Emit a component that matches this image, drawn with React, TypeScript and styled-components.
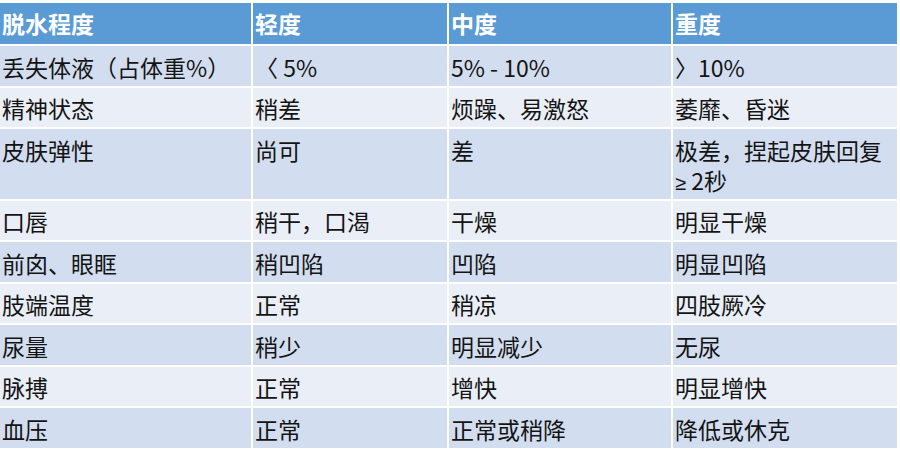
import React from "react";
import styled, { createGlobalStyle } from "styled-components";

const GlobalStyle = createGlobalStyle`
  html, body {
    margin: 0;
    padding: 0;
    background: #ffffff;
  }
  body {
    font-family: "Noto Sans CJK SC", "Noto Sans", sans-serif;
  }
`;

const Page = styled.div`
  width: 900px;
  height: 454px;
  padding-top: 3px;
  box-sizing: border-box;
  background: #ffffff;
`;

const Table = styled.div`
  display: grid;
  grid-template-columns: 251px 194px 222px 224px;
  column-gap: 2px;
  row-gap: 2px;
  width: 897px;
`;

const HeadCell = styled.div`
  background: #5b9bd5;
  color: #ffffff;
  font-weight: 700;
  font-size: 23px;
  line-height: 30px;
  height: 41px;
  box-sizing: border-box;
  padding: 5px 0 6px 2px;
  white-space: nowrap;
`;

const Cell = styled.div<{ $band: "dark" | "light"; $tall?: boolean }>`
  background: ${(p) => (p.$band === "dark" ? "#d2deef" : "#eaeff7")};
  color: #141414;
  font-size: 23px;
  line-height: 30px;
  height: ${(p) => (p.$tall ? "69.5px" : "39.5px")};
  box-sizing: border-box;
  padding: 5.5px 0 4px 2px;
  white-space: nowrap;
`;

const Latin = styled.span`
  font-family: "Liberation Sans", "DejaVu Sans", sans-serif;
  font-size: 20px;
`;

const header = ["脱水程度", "轻度", "中度", "重度"];

type Row = { cells: React.ReactNode[]; tall?: boolean };

const rows: Row[] = [
  { cells: ["丢失体液（占体重%）", "〈 5%", "5% - 10%", "〉10%"] },
  { cells: ["精神状态", "稍差", "烦躁、易激怒", "萎靡、昏迷"] },
  {
    cells: [
      "皮肤弹性",
      "尚可",
      "差",
      <>
        极差，捏起皮肤回复
        <br />
        <Latin>≥</Latin> 2秒
      </>,
    ],
    tall: true,
  },
  { cells: ["口唇", "稍干，口渴", "干燥", "明显干燥"] },
  { cells: ["前囟、眼眶", "稍凹陷", "凹陷", "明显凹陷"] },
  { cells: ["肢端温度", "正常", "稍凉", "四肢厥冷"] },
  { cells: ["尿量", "稍少", "明显减少", "无尿"] },
  { cells: ["脉搏", "正常", "增快", "明显增快"] },
  { cells: ["血压", "正常", "正常或稍降", "降低或休克"] },
];

export default function App() {
  return (
    <Page>
      <GlobalStyle />
      <Table>
        {header.map((h) => (
          <HeadCell key={h}>{h}</HeadCell>
        ))}
        {rows.map((r, i) =>
          r.cells.map((c, j) => (
            <Cell
              key={`${i}-${j}`}
              $band={i % 2 === 0 ? "dark" : "light"}
              $tall={r.tall}
            >
              {c}
            </Cell>
          ))
        )}
      </Table>
    </Page>
  );
}
